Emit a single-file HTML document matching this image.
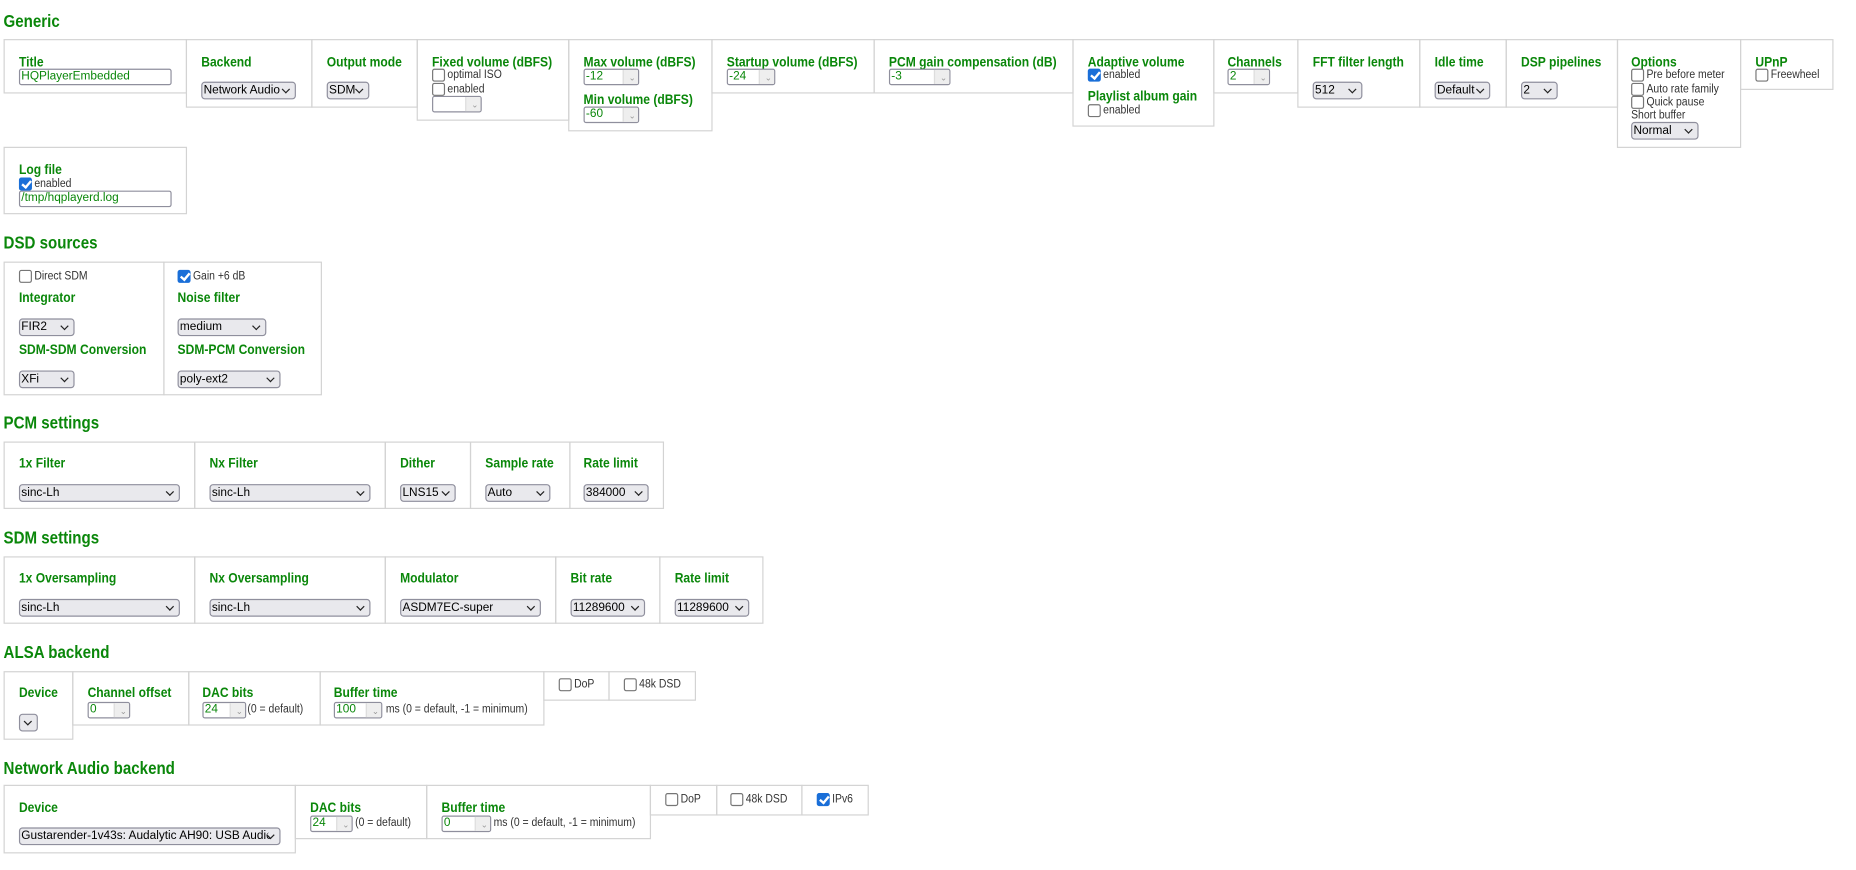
<!DOCTYPE html>
<html><head><meta charset="utf-8"><style>
*{box-sizing:border-box}
body{margin:0;width:1856px;height:870px;background:#fff;position:relative;overflow:hidden;font-family:"Liberation Sans",sans-serif}
#w{position:absolute;left:0;top:0;width:1568px;height:735px;transform:scale(1.18367);transform-origin:0 0}
.h{position:absolute;font:bold 15px/18px "Liberation Sans",sans-serif;color:#0a870a;transform:scaleX(.85);transform-origin:0 0;white-space:nowrap}
.b{position:absolute;border:1px solid #d3d3d3}
.l{position:absolute;font:bold 12px/14px "Liberation Sans",sans-serif;color:#0a870a;white-space:nowrap;transform:scaleX(.85);transform-origin:0 0}
.t{position:absolute;font:10px/12px "Liberation Sans",sans-serif;color:#333;white-space:nowrap;margin-top:1px;transform:scaleX(.88);transform-origin:0 0}
.s{position:absolute;height:15px;border:1px solid #8f8f9d;border-radius:3px;background:#e9e9ed;font:10px/13px "Liberation Sans",sans-serif;color:#000;padding-left:1px;white-space:nowrap;overflow:hidden;padding-right:12px}
.s:after{content:"";position:absolute;right:5px;top:3px;width:4px;height:4px;border-right:1.3px solid #222;border-bottom:1.3px solid #222;transform:rotate(45deg);background:#e9e9ed}
.i{position:absolute;height:14px;border:1px solid #8f8f9d;border-radius:2px;background:#fff;font:10px/12px "Liberation Sans",sans-serif;color:#0a870a;padding-left:1px;white-space:nowrap;overflow:hidden}
.n:after{content:"";position:absolute;right:0;top:0;bottom:0;width:12px;background:#eee;border-left:1px solid #ddd}
.n:before{content:"⌃\A⌄";white-space:pre;position:absolute;right:2px;top:-1px;font-size:7px;line-height:6px;color:#999;z-index:2}
.c{position:absolute;width:11px;height:11px;border:1px solid #767676;border-radius:2px;background:#fff}
.c.k{background:#1a6fd8;border-color:#1a6fd8}
.c.k:after{content:"";position:absolute;left:3px;top:0px;width:3px;height:6px;border-right:2px solid #fff;border-bottom:2px solid #fff;transform:rotate(40deg)}
</style></head><body><div id="w">

<div class="h" style="left:3px;top:10px">Generic</div>
<div class="b" style="left:3px;top:33px;width:155px;height:46px"></div>
<div class="b" style="left:157px;top:33px;width:107px;height:58px"></div>
<div class="b" style="left:263px;top:33px;width:90px;height:58px"></div>
<div class="b" style="left:352px;top:33px;width:129px;height:69px"></div>
<div class="b" style="left:480px;top:33px;width:122px;height:78px"></div>
<div class="b" style="left:601px;top:33px;width:138px;height:46px"></div>
<div class="b" style="left:738px;top:33px;width:169px;height:46px"></div>
<div class="b" style="left:906px;top:33px;width:120px;height:74px"></div>
<div class="b" style="left:1025px;top:33px;width:72px;height:46px"></div>
<div class="b" style="left:1096px;top:33px;width:104px;height:58px"></div>
<div class="b" style="left:1199px;top:33px;width:74px;height:58px"></div>
<div class="b" style="left:1272px;top:33px;width:95px;height:58px"></div>
<div class="b" style="left:1366px;top:33px;width:105px;height:92px"></div>
<div class="b" style="left:1470px;top:33px;width:79px;height:43px"></div>
<div class="b" style="left:3px;top:124px;width:155px;height:57px"></div>

<div class="l" style="left:16px;top:45px">Title</div>
<div class="l" style="left:170px;top:45px">Backend</div>
<div class="l" style="left:276px;top:45px">Output mode</div>
<div class="l" style="left:365px;top:45px">Fixed volume (dBFS)</div>
<div class="l" style="left:493px;top:45px">Max volume (dBFS)</div>
<div class="l" style="left:493px;top:77px">Min volume (dBFS)</div>
<div class="l" style="left:614px;top:45px">Startup volume (dBFS)</div>
<div class="l" style="left:751px;top:45px">PCM gain compensation (dB)</div>
<div class="l" style="left:919px;top:45px">Adaptive volume</div>
<div class="l" style="left:919px;top:74px">Playlist album gain</div>
<div class="l" style="left:1037px;top:45px">Channels</div>
<div class="l" style="left:1109px;top:45px">FFT filter length</div>
<div class="l" style="left:1212px;top:45px">Idle time</div>
<div class="l" style="left:1285px;top:45px">DSP pipelines</div>
<div class="l" style="left:1378px;top:45px">Options</div>
<div class="l" style="left:1483px;top:45px">UPnP</div>
<div class="l" style="left:16px;top:136px">Log file</div>

<div class="i" style="left:16px;top:58px;width:129px">HQPlayerEmbedded</div>
<div class="i n" style="left:493px;top:58px;width:47px">-12</div>
<div class="i n" style="left:493px;top:90px;width:47px">-60</div>
<div class="i n" style="left:365px;top:81px;width:42px"></div>
<div class="i n" style="left:614px;top:58px;width:41px">-24</div>
<div class="i n" style="left:751px;top:58px;width:52px">-3</div>
<div class="i n" style="left:1037px;top:58px;width:36px">2</div>
<div class="i" style="left:16px;top:161px;width:129px">/tmp/hqplayerd.log</div>

<div class="s" style="left:170px;top:69px;width:80px">Network Audio</div>
<div class="s" style="left:276px;top:69px;width:36px">SDM</div>
<div class="s" style="left:1109px;top:69px;width:42px">512</div>
<div class="s" style="left:1212px;top:69px;width:47px">Default</div>
<div class="s" style="left:1285px;top:69px;width:31px">2</div>
<div class="s" style="left:1378px;top:103px;width:57px">Normal</div>

<div class="c" style="left:365px;top:58px"></div><div class="t" style="left:378px;top:57px">optimal ISO</div>
<div class="c" style="left:365px;top:70px"></div><div class="t" style="left:378px;top:69px">enabled</div>
<div class="c k" style="left:919px;top:58px"></div><div class="t" style="left:932px;top:57px">enabled</div>
<div class="c" style="left:919px;top:88px"></div><div class="t" style="left:932px;top:87px">enabled</div>
<div class="c" style="left:1378px;top:58px"></div><div class="t" style="left:1391px;top:57px">Pre before meter</div>
<div class="c" style="left:1378px;top:70px"></div><div class="t" style="left:1391px;top:69px">Auto rate family</div>
<div class="c" style="left:1378px;top:81px"></div><div class="t" style="left:1391px;top:80px">Quick pause</div>
<div class="t" style="left:1378px;top:91px">Short buffer</div>
<div class="c" style="left:1483px;top:58px"></div><div class="t" style="left:1496px;top:57px">Freewheel</div>
<div class="c k" style="left:16px;top:150px"></div><div class="t" style="left:29px;top:149px">enabled</div>

<div class="h" style="left:3px;top:197px">DSD sources</div>
<div class="b" style="left:3px;top:221px;width:136px;height:113px"></div>
<div class="b" style="left:138px;top:221px;width:134px;height:113px"></div>
<div class="c" style="left:16px;top:228px"></div><div class="t" style="left:29px;top:227px">Direct SDM</div>
<div class="c k" style="left:150px;top:228px"></div><div class="t" style="left:163px;top:227px">Gain +6 dB</div>
<div class="l" style="left:16px;top:244px">Integrator</div>
<div class="l" style="left:150px;top:244px">Noise filter</div>
<div class="l" style="left:16px;top:288px">SDM-SDM Conversion</div>
<div class="l" style="left:150px;top:288px">SDM-PCM Conversion</div>
<div class="s" style="left:16px;top:269px;width:47px">FIR2</div>
<div class="s" style="left:150px;top:269px;width:75px">medium</div>
<div class="s" style="left:16px;top:313px;width:47px">XFi</div>
<div class="s" style="left:150px;top:313px;width:87px">poly-ext2</div>

<div class="h" style="left:3px;top:349px">PCM settings</div>
<div class="b" style="left:3px;top:373px;width:162px;height:57px"></div>
<div class="b" style="left:164px;top:373px;width:162px;height:57px"></div>
<div class="b" style="left:325px;top:373px;width:73px;height:57px"></div>
<div class="b" style="left:397px;top:373px;width:85px;height:57px"></div>
<div class="b" style="left:481px;top:373px;width:80px;height:57px"></div>
<div class="l" style="left:16px;top:384px">1x Filter</div>
<div class="l" style="left:177px;top:384px">Nx Filter</div>
<div class="l" style="left:338px;top:384px">Dither</div>
<div class="l" style="left:410px;top:384px">Sample rate</div>
<div class="l" style="left:493px;top:384px">Rate limit</div>
<div class="s" style="left:16px;top:409px;width:136px">sinc-Lh</div>
<div class="s" style="left:177px;top:409px;width:136px">sinc-Lh</div>
<div class="s" style="left:338px;top:409px;width:47px">LNS15</div>
<div class="s" style="left:410px;top:409px;width:55px">Auto</div>
<div class="s" style="left:493px;top:409px;width:55px">384000</div>

<div class="h" style="left:3px;top:446px">SDM settings</div>
<div class="b" style="left:3px;top:470px;width:162px;height:57px"></div>
<div class="b" style="left:164px;top:470px;width:162px;height:57px"></div>
<div class="b" style="left:325px;top:470px;width:145px;height:57px"></div>
<div class="b" style="left:469px;top:470px;width:89px;height:57px"></div>
<div class="b" style="left:557px;top:470px;width:88px;height:57px"></div>
<div class="l" style="left:16px;top:481px">1x Oversampling</div>
<div class="l" style="left:177px;top:481px">Nx Oversampling</div>
<div class="l" style="left:338px;top:481px">Modulator</div>
<div class="l" style="left:482px;top:481px">Bit rate</div>
<div class="l" style="left:570px;top:481px">Rate limit</div>
<div class="s" style="left:16px;top:506px;width:136px">sinc-Lh</div>
<div class="s" style="left:177px;top:506px;width:136px">sinc-Lh</div>
<div class="s" style="left:338px;top:506px;width:119px">ASDM7EC-super</div>
<div class="s" style="left:482px;top:506px;width:63px">11289600</div>
<div class="s" style="left:570px;top:506px;width:63px">11289600</div>

<div class="h" style="left:3px;top:543px">ALSA backend</div>
<div class="b" style="left:3px;top:567px;width:59px;height:58px"></div>
<div class="b" style="left:61px;top:567px;width:99px;height:46px"></div>
<div class="b" style="left:159px;top:567px;width:112px;height:46px"></div>
<div class="b" style="left:270px;top:567px;width:190px;height:46px"></div>
<div class="b" style="left:459px;top:567px;width:56px;height:25px"></div>
<div class="b" style="left:514px;top:567px;width:74px;height:25px"></div>
<div class="l" style="left:16px;top:578px">Device</div>
<div class="l" style="left:74px;top:578px">Channel offset</div>
<div class="l" style="left:171px;top:578px">DAC bits</div>
<div class="l" style="left:282px;top:578px">Buffer time</div>
<div class="i n" style="left:74px;top:593px;width:36px">0</div>
<div class="i n" style="left:171px;top:593px;width:37px">24</div>
<div class="i n" style="left:282px;top:593px;width:41px">100</div>
<div class="t" style="left:209px;top:593px">(0 = default)</div>
<div class="t" style="left:326px;top:593px">ms (0 = default, -1 = minimum)</div>
<div class="s" style="left:16px;top:603px;width:16px"></div>
<div class="c" style="left:472px;top:573px"></div><div class="t" style="left:485px;top:572px">DoP</div>
<div class="c" style="left:527px;top:573px"></div><div class="t" style="left:540px;top:572px">48k DSD</div>

<div class="h" style="left:3px;top:641px">Network Audio backend</div>
<div class="b" style="left:3px;top:663px;width:247px;height:58px"></div>
<div class="b" style="left:249px;top:663px;width:112px;height:46px"></div>
<div class="b" style="left:360px;top:663px;width:190px;height:46px"></div>
<div class="b" style="left:549px;top:663px;width:57px;height:26px"></div>
<div class="b" style="left:605px;top:663px;width:73px;height:26px"></div>
<div class="b" style="left:677px;top:663px;width:57px;height:26px"></div>
<div class="l" style="left:16px;top:675px">Device</div>
<div class="l" style="left:262px;top:675px">DAC bits</div>
<div class="l" style="left:373px;top:675px">Buffer time</div>
<div class="s" style="left:16px;top:699px;width:221px">Gustarender-1v43s: Audalytic AH90: USB Audio</div>
<div class="i n" style="left:262px;top:689px;width:36px">24</div>
<div class="i n" style="left:373px;top:689px;width:42px">0</div>
<div class="t" style="left:300px;top:689px">(0 = default)</div>
<div class="t" style="left:417px;top:689px">ms (0 = default, -1 = minimum)</div>
<div class="c" style="left:562px;top:670px"></div><div class="t" style="left:575px;top:669px">DoP</div>
<div class="c" style="left:617px;top:670px"></div><div class="t" style="left:630px;top:669px">48k DSD</div>
<div class="c k" style="left:690px;top:670px"></div><div class="t" style="left:703px;top:669px">IPv6</div>

</div></body></html>
